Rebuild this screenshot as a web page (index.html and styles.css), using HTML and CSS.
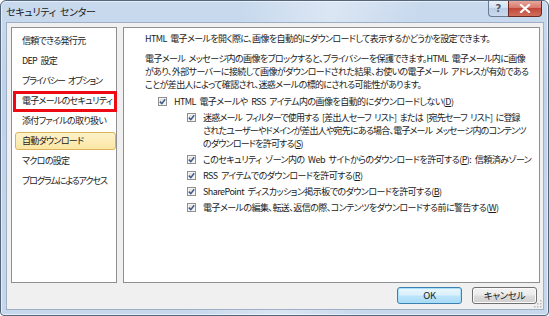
FILE: index.html
```html
<!DOCTYPE html>
<html lang="ja">
<head>
<meta charset="utf-8">
<title>セキュリティ センター</title>
<link rel="stylesheet" href="styles.css">
</head>
<body>
<div class="window">
  <div class="titlebar">
    <span class="title">セキュリティ センター</span>
    <div class="caption-buttons">
      <div class="cap-btn help">?</div>
      <div class="cap-btn close">
        <svg width="12" height="9" viewBox="0 0 12 9"><path d="M2 1 L10 8 M10 1 L2 8" stroke="#fff" stroke-width="2.2" stroke-linecap="square"/></svg>
      </div>
    </div>
  </div>
  <div class="client">
    <div class="panels">
      <ul class="nav">
        <li class="nav-item">信頼できる発行元</li>
        <li class="nav-item">DEP 設定</li>
        <li class="nav-item kana">プライバシー オプション</li>
        <li class="nav-item marked">電子メールのセキュリティ</li>
        <li class="nav-item">添付ファイルの取り扱い</li>
        <li class="nav-item selected"><span class="sel-box">自動ダウンロード</span></li>
        <li class="nav-item">マクロの設定</li>
        <li class="nav-item kana">プログラムによるアクセス</li>
      </ul>
      <div class="content">
        <p class="intro">HTML 電子メールを開く際に、画像を自動的にダウンロードして表示するかどうかを設定できます。</p>
        <p class="desc">電子メール メッセージ内の画像をブロックすると、プライバシーを保護できます。HTML 電子メール内に画像<br>があり、外部サーバーに接続して画像がダウンロードされた結果、お使いの電子メール アドレスが有効である<br>ことが差出人によって確認され、迷惑メールの標的にされる可能性があります。</p>
        <div class="opt level1">
          <span class="cb"><svg width="7" height="7" viewBox="0 0 7 7"><path d="M0.8 3.6 L2.8 5.6 L6.2 1.2" fill="none" stroke="#3f5a8a" stroke-width="1.5"/></svg></span>
          <span class="opt-text">HTML 電子メールや RSS アイテム内の画像を自動的にダウンロードしない(<u>D</u>)</span>
        </div>
        <div class="opt level2 tight">
          <span class="cb"><svg width="7" height="7" viewBox="0 0 7 7"><path d="M0.8 3.6 L2.8 5.6 L6.2 1.2" fill="none" stroke="#3f5a8a" stroke-width="1.5"/></svg></span>
          <span class="opt-text">迷惑メール フィルターで使用する [差出人セーフ リスト] または [宛先セーフ リスト] に登録<br>されたユーザーやドメインが差出人や宛先にある場合、電子メール メッセージ内のコンテンツ<br>のダウンロードを許可する(<u>S</u>)</span>
        </div>
        <div class="opt level2">
          <span class="cb"><svg width="7" height="7" viewBox="0 0 7 7"><path d="M0.8 3.6 L2.8 5.6 L6.2 1.2" fill="none" stroke="#3f5a8a" stroke-width="1.5"/></svg></span>
          <span class="opt-text">このセキュリティ ゾーン内の Web サイトからのダウンロードを許可する(<u>P</u>): 信頼済みゾーン</span>
        </div>
        <div class="opt level2">
          <span class="cb"><svg width="7" height="7" viewBox="0 0 7 7"><path d="M0.8 3.6 L2.8 5.6 L6.2 1.2" fill="none" stroke="#3f5a8a" stroke-width="1.5"/></svg></span>
          <span class="opt-text">RSS アイテムでのダウンロードを許可する(<u>R</u>)</span>
        </div>
        <div class="opt level2">
          <span class="cb"><svg width="7" height="7" viewBox="0 0 7 7"><path d="M0.8 3.6 L2.8 5.6 L6.2 1.2" fill="none" stroke="#3f5a8a" stroke-width="1.5"/></svg></span>
          <span class="opt-text">SharePoint ディスカッション掲示板でのダウンロードを許可する(<u>B</u>)</span>
        </div>
        <div class="opt level2">
          <span class="cb"><svg width="7" height="7" viewBox="0 0 7 7"><path d="M0.8 3.6 L2.8 5.6 L6.2 1.2" fill="none" stroke="#3f5a8a" stroke-width="1.5"/></svg></span>
          <span class="opt-text">電子メールの編集、転送、返信の際、コンテンツをダウンロードする前に警告する(<u>W</u>)</span>
        </div>
      </div>
    </div>
    <div class="buttons">
      <button class="btn default">OK</button>
      <button class="btn">キャンセル</button>
    </div>
    <svg class="grip" width="8" height="8" viewBox="0 0 8 8">
      <g fill="#b8b8b8">
        <rect x="6" y="0" width="1.5" height="1.5"/>
        <rect x="3" y="3" width="1.5" height="1.5"/><rect x="6" y="3" width="1.5" height="1.5"/>
        <rect x="0" y="6" width="1.5" height="1.5"/><rect x="3" y="6" width="1.5" height="1.5"/><rect x="6" y="6" width="1.5" height="1.5"/>
      </g>
    </svg>
  </div>
</div>
</body>
</html>
```

FILE: styles.css
```css
* { box-sizing: border-box; }
html, body { margin: 0; padding: 0; }
body {
  width: 549px;
  height: 316px;
  overflow: hidden;
  font-family: "Noto Sans CJK JP", "Noto Sans", sans-serif;
  font-size: 9px;
  line-height: 13px;
  color: #1b1b1b;
  font-feature-settings: "palt";
  background: #ffffff;
}
.window {
  width: 549px;
  height: 316px;
  border: 1px solid #55657a;
  border-radius: 6px 6px 4px 4px;
  background:
    linear-gradient(100deg, rgba(255,255,255,0) 40%, rgba(255,255,255,0.35) 55%, rgba(255,255,255,0) 70%),
    linear-gradient(180deg, #c9daee 0%, #bed2ea 30%, #c7d8ed 100%);
  box-shadow: inset 0 0 0 1px rgba(255,255,255,0.55);
  display: flex;
  flex-direction: column;
}
.titlebar {
  height: 21px;
  display: flex;
  align-items: flex-start;
  flex: none;
}
.title {
  padding: 4px 0 0 5px;
  font-size: 10px;
  letter-spacing: -0.3px;
  word-spacing: 2px;
  color: #1a1a1a;
}
.caption-buttons {
  margin-left: auto;
  margin-right: 6px;
  display: flex;
}
.cap-btn {
  height: 16px;
  display: flex;
  align-items: center;
  justify-content: center;
  border: 1px solid #6a7b92;
  border-top: none;
}
.help {
  width: 20px;
  border-right: none;
  border-radius: 0 0 0 4px;
  background: linear-gradient(180deg, #e9f0f8 0%, #d3e0f0 45%, #bccfe6 50%, #cad9ec 100%);
  color: #4d5a6b;
  font-family: "DejaVu Sans", sans-serif;
  font-weight: bold;
  font-size: 10px;
}
.close {
  width: 34px;
  border-color: #6d2a22;
  border-radius: 0 0 4px 0;
  background: linear-gradient(180deg, #e8a89d 0%, #d77a6c 45%, #c2473a 50%, #d0705d 100%);
}
.client {
  position: relative;
  flex: none;
  height: 288px;
  margin: 0 4px 0 5px;
  background: #f0f0f0;
  border: 1px solid #9fb0c6;
  padding: 4px 3px 0 4px;
  display: flex;
  flex-direction: column;
}
.panels {
  display: flex;
  gap: 6px;
  height: 256px;
}
.nav {
  list-style: none;
  margin: 0;
  padding: 3px 0 0 0;
  width: 106px;
  background: #fff;
  border: 1px solid #8f9092;
}
.nav-item {
  position: relative;
  height: 20px;
  line-height: 20px;
  padding-left: 10px;
  white-space: nowrap;
  letter-spacing: -0.7px;
  word-spacing: 2px;
}
.nav-item.kana { letter-spacing: -1.1px; }
.nav-item.marked::after {
  content: "";
  position: absolute;
  left: 1px;
  right: -1px;
  top: 0;
  bottom: -1px;
  border: 3px solid #ee0a12;
}
.nav-item.selected {
  padding: 1px 0 1px 3px;
}
.sel-box {
  display: block;
  height: 18px;
  line-height: 16px;
  padding-left: 6px;
  border: 1px solid #dbb35a;
  border-radius: 3px;
  background: linear-gradient(180deg, #fdf2c9 0%, #fbe6a4 100%);
}
.content {
  width: 417px;
  background: #fff;
  border: 1px solid #8f9092;
  padding: 4px 0 0 21px;
  white-space: nowrap;
}
.content p {
  margin: 0;
  letter-spacing: -0.6px;
  word-spacing: 2px;
}
.desc { margin-top: 7px !important; }
.opt {
  display: flex;
  align-items: flex-start;
  gap: 7px;
  margin-top: 3px;
  letter-spacing: -0.55px;
  word-spacing: 2px;
}
.opt.tight { letter-spacing: -0.8px; }
.opt.level1 { margin-top: 4px; padding-left: 13px; }
.opt.level2 { padding-left: 42px; }
.opt u { text-decoration: underline; text-underline-offset: 1px; }
.cb {
  flex: none;
  width: 9px;
  height: 9px;
  margin-top: 2px;
  border: 1px solid #8e8f8f;
  background: linear-gradient(135deg, #dcdcdc 0%, #f4f4f4 100%);
  box-shadow: inset 0 0 0 1px #f6f6f6;
  display: flex;
  align-items: center;
  justify-content: center;
}
.buttons {
  display: flex;
  justify-content: flex-end;
  gap: 10px;
  margin-top: 4px;
  padding-right: 3px;
}
.btn {
  width: 65px;
  height: 17px;
  padding: 0;
  font-family: "Noto Sans CJK JP", "Noto Sans", sans-serif;
  font-feature-settings: "palt";
  font-size: 9.5px;
  line-height: 15px;
  letter-spacing: -0.3px;
  color: #1b1b1b;
  border: 1px solid #707070;
  border-radius: 3px;
  background: linear-gradient(180deg, #f3f3f3 0%, #ebebeb 48%, #dddddd 52%, #cfcfcf 100%);
  box-shadow: inset 0 0 0 1px #fafafa;
}
.btn.default {
  border-color: #3c7fb1;
  box-shadow: inset 0 0 0 1px #a8e1f7;
  background: linear-gradient(180deg, #eaf6fd 0%, #d9f0fc 48%, #bee6fd 52%, #a7d9f5 100%);
}
.grip {
  position: absolute;
  right: 1px;
  bottom: 1px;
}
```
